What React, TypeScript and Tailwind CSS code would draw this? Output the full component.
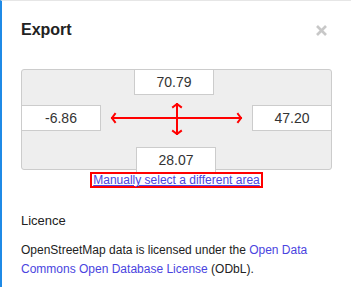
import { ReactNode } from "react"

function CoordBox({ children, className = "" }: { children: ReactNode; className?: string }) {
  return (
    <div
      className={`w-[80px] h-[26px] bg-white border border-[#ccc] flex items-center justify-center text-[14px] text-[#333] ${className}`}
    >
      {children}
    </div>
  )
}

function Arrows() {
  return (
    <svg width="151" height="32" viewBox="0 0 151 32" className="-mt-[2px] shrink-0">
      <g stroke="#ff0000" strokeWidth="2" fill="none" strokeLinecap="square">
        <line x1="11" y1="15" x2="140" y2="15" />
        <polyline points="14,11 11,15 14,19" />
        <polyline points="137,11 140,15 137,19" />
        <line x1="76" y1="1" x2="76" y2="31" />
        <polyline points="72,4 76,1 80,4" />
        <polyline points="72,28 76,31 80,28" />
      </g>
    </svg>
  )
}

export default function App() {
  return (
    <div className="w-[351px] h-[287px] bg-white border-t border-[#e6e6e6] border-l-2 border-l-[#1f8ae6] font-['Liberation_Sans',Arial,sans-serif] text-[#222] overflow-hidden">
      <div className="flex items-start justify-between pl-[19px] pr-[24px] pt-[19px]">
        <h1 className="text-[16px] leading-[20px] font-bold">Export</h1>
        <button className="mt-[5px]">
          <svg width="11" height="11" viewBox="0 0 11 11">
            <g stroke="#c8c8c8" strokeWidth="2.6">
              <line x1="1" y1="1" x2="10" y2="10" />
              <line x1="10" y1="1" x2="1" y2="10" />
            </g>
          </svg>
        </button>
      </div>

      <div className="mx-[19px] mt-[29px] h-[101px] rounded-[3px] border border-[#ccc] bg-[#eee] flex flex-col">
        <div className="flex pl-[112px]">
          <CoordBox className="-mt-px">70.79</CoordBox>
        </div>
        <div className="flex items-start justify-between mt-[10px] -mx-px">
          <CoordBox>-6.86</CoordBox>
          <Arrows />
          <CoordBox>47.20</CoordBox>
        </div>
        <div className="flex pl-[114px] mt-[12px]">
          <CoordBox>28.07</CoordBox>
        </div>
      </div>

      <div className="flex justify-center mt-[2px]">
        <a href="#" className="border-2 border-[#ff0000] px-px text-[12px] leading-[12px] text-[#4a44e0] underline">
          Manually select a different area
        </a>
      </div>

      <div className="pl-[19px] pr-[20px] mt-[24px]">
        <h2 className="text-[13px] leading-[18px]">Licence</h2>
        <p className="mt-[11px] text-[12px] leading-[19px]">
          OpenStreetMap data is licensed under the{" "}
          <a href="#" className="text-[#4a44e0]">Open Data Commons Open Database License</a> (ODbL).
        </p>
      </div>
    </div>
  )
}
